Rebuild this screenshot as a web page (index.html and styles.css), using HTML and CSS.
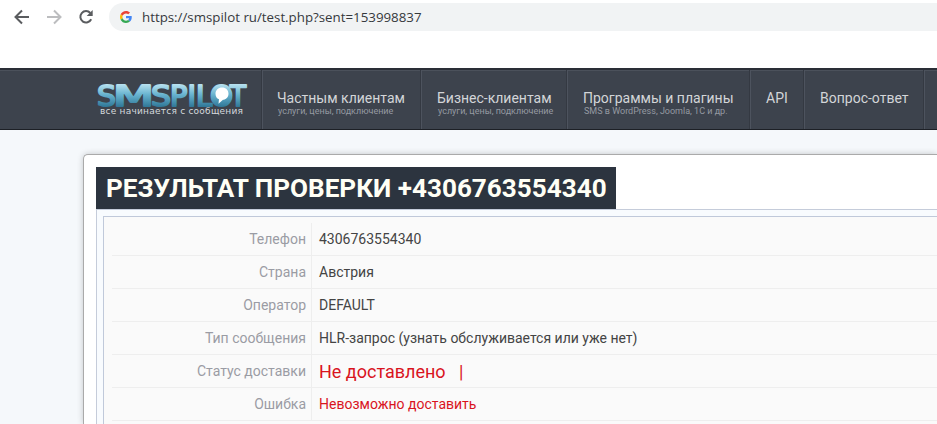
FILE: index.html
```html
<!DOCTYPE html>
<html lang="ru">
<head>
    <meta charset="UTF-8">
    <title>SMSPILOT - Результат проверки</title>
    <link rel="stylesheet" href="styles.css">
</head>
<body>
    <div class="browser-bar">
        <svg class="nav-icon" viewBox="0 0 16 16"><path d="M15 8H2M8 1.5L1.5 8L8 14.5" /></svg>
        <svg class="nav-icon disabled" viewBox="0 0 16 16"><path d="M1 8h13M8 1.5L14.500 8L8 14.5" /></svg>
        <svg class="nav-icon" viewBox="0 0 16 16"><path d="M13.200 10.300A5.700 5.700 0 1 1 12.300 4" /><path class="solid" d="M14.700 1v6h-6z" /></svg>
        <div class="address">
            <svg class="google" viewBox="0 0 48 48">
                <path fill="#ea4335" d="M24 9.500c3.500 0 6.700 1.200 9.200 3.600l6.900-6.900C35.900 2.400 30.500 0 24 0 14.600 0 6.500 5.400 2.600 13.200l8 6.200C12.400 13.700 17.700 9.500 24 9.500z" />
                <path fill="#4285f4" d="M47 24.500c0-1.600-.2-3.100-.4-4.500H24v9h12.900c-.6 3-2.200 5.500-4.700 7.200l7.700 6C44.400 38 47 31.800 47 24.500z" />
                <path fill="#fbbc05" d="M10.500 28.600c-.5-1.500-.8-3-.8-4.600s.3-3.100.8-4.600l-8-6.200C.9 16.500 0 20.100 0 24s.9 7.500 2.600 10.800z" />
                <path fill="#34a853" d="M24 48c6.500 0 11.900-2.100 15.900-5.800l-7.700-6c-2.200 1.500-4.900 2.300-8.200 2.300-6.300 0-11.600-4.200-13.500-9.900l-8 6.200C6.500 42.600 14.600 48 24 48z" />
            </svg>
            <span class="url">https://smspilot ru/test.php?sent=153998837</span>
        </div>
    </div>

    <div class="header">
        <a class="logo">
            <svg width="152" height="48" viewBox="0 0 152 48">
                <defs>
                    <linearGradient id="logo-fill" gradientUnits="userSpaceOnUse" x1="0" y1="13" x2="0" y2="36">
                        <stop offset="0" stop-color="#b9e2f0" />
                        <stop offset="0.45" stop-color="#69b4d0" />
                        <stop offset="1" stop-color="#2f7797" />
                    </linearGradient>
                </defs>
                <g class="logo-name">
                    <text x="0" y="35" textLength="19" lengthAdjust="spacingAndGlyphs">S</text>
                    <text x="16" y="35" textLength="41" lengthAdjust="spacingAndGlyphs">M</text>
                    <text x="54" y="35" textLength="20" lengthAdjust="spacingAndGlyphs">S</text>
                    <text x="73" y="35" textLength="42" lengthAdjust="spacingAndGlyphs">PIL</text>
                    <text x="113" y="35" textLength="23" lengthAdjust="spacingAndGlyphs">O</text>
                    <text x="133" y="35" textLength="16" lengthAdjust="spacingAndGlyphs">T</text>
                </g>
                <circle cx="124.500" cy="24.500" r="10.500" fill="url(#logo-fill)" />
                <path fill="#fff" d="M125 16.500c4 0 6.500 2.700 6.500 6.200s-2.700 5.900-5.500 6.100l-4.500 4 .5-4.500c-2.300-.9-3.500-3.100-3.500-5.600 0-3.500 2.800-6.200 6.500-6.200z" />
                <text class="logo-slogan" x="3" y="43" textLength="143">все начинается с сообщения</text>
            </svg>
        </a>
        <a class="menu-item clients">Частным клиентам<small>услуги, цены, подключение</small></a>
        <a class="menu-item business">Бизнес-клиентам<small>услуги, цены, подключение</small></a>
        <a class="menu-item plugins">Программы и плагины<small>SMS в WordPress, Joomla, 1С и др.</small></a>
        <a class="menu-item api">API</a>
        <a class="menu-item faq">Вопрос-ответ</a>
        <a class="menu-item last"></a>
    </div>

    <div class="card">
        <h1>РЕЗУЛЬТАТ ПРОВЕРКИ +4306763554340</h1>
        <div class="panel">
            <div class="result">
                <div class="row"><div class="label">Телефон</div><div class="value">4306763554340</div></div>
                <div class="row"><div class="label">Страна</div><div class="value">Австрия</div></div>
                <div class="row"><div class="label">Оператор</div><div class="value">DEFAULT</div></div>
                <div class="row"><div class="label">Тип сообщения</div><div class="value">HLR-запрос (узнать обслуживается или уже нет)</div></div>
                <div class="row"><div class="label">Статус доставки</div><div class="value status">Не доставлено <span class="bar">|</span></div></div>
                <div class="row"><div class="label">Ошибка</div><div class="value error">Невозможно доставить</div></div>
            </div>
        </div>
    </div>
</body>
</html>
```
FILE: styles.css
```css
* {
    box-sizing: border-box;
}
body {
    display: flex;
    flex-direction: column;
    margin: 0;
    height: 424px;
    overflow: hidden;
    background: #f5f8fb;
    font-family: Roboto, sans-serif;
    font-size: 14px;
    color: #444;
}

/* browser toolbar */
.browser-bar {
    display: flex;
    flex: none;
    align-items: flex-start;
    height: 68px;
    padding: 3px 0 0 14px;
    background: #fff;
}
.nav-icon {
    flex: none;
    width: 16px;
    height: 16px;
    margin: 6px 16px 0 0;
    fill: none;
    stroke: #5a5c5f;
    stroke-width: 2;
}
.nav-icon .solid {
    fill: #5a5c5f;
    stroke: none;
}
.nav-icon.disabled {
    stroke: #bcbdbf;
}
.address {
    display: flex;
    align-items: center;
    flex: 1;
    height: 28px;
    padding-left: 11px;
    background: #f1f3f4;
    border-radius: 14px 0 0 14px;
    margin-left: -1px;
}
.google {
    width: 12px;
    height: 12px;
    margin-right: 10px;
}
.url {
    font-family: "Open Sans", sans-serif;
    font-size: 13.3px;
    color: #36393d;
    white-space: nowrap;
}

/* site menu */
.header {
    display: flex;
    flex: none;
    height: 62px;
    background: #3d434d;
    border-top: 2px solid #2a2e36;
    border-bottom: 1px solid #1d2026;
    box-shadow: inset 0 1px #4b515b;
}
.logo {
    flex: none;
    width: 262px;
    padding: 1px 0 0 97px;
    border-right: 1px solid #343942;
}
.logo svg {
    display: block;
}
.logo-name {
    font: 28px "DejaVu Sans", sans-serif;
    fill: url(#logo-fill);
    stroke: url(#logo-fill);
    stroke-width: 2px;
    stroke-linejoin: round;
}
.logo-slogan {
    font: 9px "DejaVu Sans", sans-serif;
    fill: #d5d9dd;
}
.menu-item {
    flex: none;
    padding: 20px 0 0 14px;
    border-left: 1px solid #4d535e;
    border-right: 1px solid #343942;
    line-height: 17px;
    color: #d3d5d8;
    white-space: nowrap;
}
.menu-item small {
    display: block;
    padding-left: 1px;
    font-size: 9px;
    line-height: 9px;
    color: #959aa2;
}
.clients {
    width: 159px;
}
.business {
    width: 146px;
    padding-left: 15px;
}
.plugins {
    width: 183px;
    padding-left: 15px;
}
.api {
    width: 54px;
    padding-left: 15px;
}
.faq {
    width: 120px;
    padding-left: 15px;
}
.last {
    flex: 1;
    padding: 0;
    border-right: none;
}

/* result card */
.card {
    flex: 1;
    min-height: 0;
    margin: 24px 0 0 83px;
    padding: 12px 0 0 12px;
    background: #fff;
    border: 1px solid #aaa;
    border-width: 1px 0 0 1px;
    border-radius: 5px 0 0 0;
    box-shadow: 0 0 6px rgba(0, 0, 0, 0.2);
}
h1 {
    width: 520px;
    height: 42px;
    margin: 0;
    padding-left: 10px;
    background: #2c343f;
    color: #fffff5;
    font-size: 26.1px;
    line-height: 42px;
    white-space: nowrap;
}
.panel {
    height: 215px;
    padding: 6px 0 0 6px;
    background: #f8fbfe;
    border: 1px solid #c5ccda;
    border-width: 1px 0 0 1px;
}
.result {
    height: 208px;
    padding: 6px 0 0 8px;
    background: #fafafa;
    border: 1px solid #c0c9da;
    border-width: 1px 0 0 1px;
}
.row {
    display: flex;
    height: 33px;
    line-height: 32px;
    border-bottom: 1px solid #eee;
}
.label {
    width: 200px;
    padding-right: 5px;
    border-right: 1px solid #eee;
    text-align: right;
    color: #9a9ca4;
}
.value {
    padding-left: 7px;
}
.status {
    font-size: 18px;
    line-height: 33px;
    color: #d9141e;
}
.bar {
    margin-left: 9px;
}
.error {
    color: #d9141e;
}
```
